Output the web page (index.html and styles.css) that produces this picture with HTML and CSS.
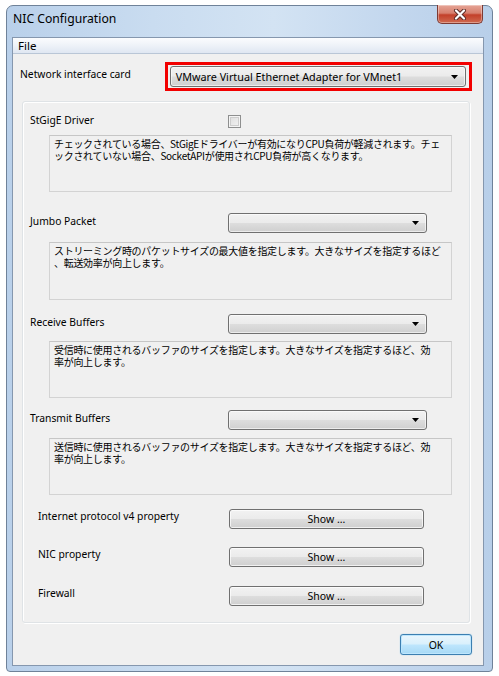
FILE: index.html
```html
<!DOCTYPE html>
<html lang="ja">
<head>
<meta charset="utf-8">
<title>NIC Configuration</title>
<link rel="stylesheet" href="styles.css">
</head>
<body>
<div class="window">
  <div class="titlebar">
    <span class="title">NIC Configuration</span>
    <div class="close">
      <svg width="14" height="11" viewBox="0 0 14 11">
        <path d="M3 1.5 L11 9.5 M11 1.5 L3 9.5" stroke="#5a2a25" stroke-width="4" stroke-linecap="round"/>
        <path d="M3 1.5 L11 9.5 M11 1.5 L3 9.5" stroke="#ffffff" stroke-width="2.2" stroke-linecap="round"/>
      </svg>
    </div>
  </div>
  <div class="client">
    <div class="menubar"><span class="menu-item">File</span></div>
    <div class="content">
      <div class="nic-row">
        <span class="label nic-label">Network interface card</span>
        <div class="highlight">
          <div class="combo combo-nic">
            <span class="combo-text">VMware Virtual Ethernet Adapter for VMnet1</span>
            <svg class="arrow" width="7" height="4" viewBox="0 0 7 4"><path d="M0 0H7L3.5 4Z" fill="#000"/></svg>
          </div>
        </div>
      </div>

      <div class="group">
        <div class="row row-check">
          <span class="label field-label">StGigE Driver</span>
          <span class="checkbox"></span>
        </div>
        <div class="desc desc-1">チェックされている場合、StGigEドライバーが有効になりCPU負荷が軽減されます。チェ<br>ックされていない場合、SocketAPIが使用されCPU負荷が高くなります。</div>

        <div class="row row-jumbo">
          <span class="label field-label">Jumbo Packet</span>
          <div class="combo combo-field"><span class="combo-text"></span><svg class="arrow" width="7" height="4" viewBox="0 0 7 4"><path d="M0 0H7L3.5 4Z" fill="#000"/></svg></div>
        </div>
        <div class="desc desc-2">ストリーミング時のパケットサイズの最大値を指定します。大きなサイズを指定するほど<br>、転送効率が向上します。</div>

        <div class="row row-recv">
          <span class="label field-label">Receive Buffers</span>
          <div class="combo combo-field"><span class="combo-text"></span><svg class="arrow" width="7" height="4" viewBox="0 0 7 4"><path d="M0 0H7L3.5 4Z" fill="#000"/></svg></div>
        </div>
        <div class="desc desc-3">受信時に使用されるバッファのサイズを指定します。大きなサイズを指定するほど、効<br>率が向上します。</div>

        <div class="row row-send">
          <span class="label field-label">Transmit Buffers</span>
          <div class="combo combo-field"><span class="combo-text"></span><svg class="arrow" width="7" height="4" viewBox="0 0 7 4"><path d="M0 0H7L3.5 4Z" fill="#000"/></svg></div>
        </div>
        <div class="desc desc-4">送信時に使用されるバッファのサイズを指定します。大きなサイズを指定するほど、効<br>率が向上します。</div>

        <div class="row row-btn row-ipv4">
          <span class="label btn-label">Internet protocol v4 property</span>
          <button class="btn show-btn">Show ...</button>
        </div>
        <div class="row row-btn row-nicprop">
          <span class="label btn-label">NIC property</span>
          <button class="btn show-btn">Show ...</button>
        </div>
        <div class="row row-btn row-fw">
          <span class="label btn-label">Firewall</span>
          <button class="btn show-btn">Show ...</button>
        </div>
      </div>

      <div class="footer">
        <button class="btn ok-btn">OK</button>
      </div>
    </div>
  </div>
</div>
</body>
</html>
```

FILE: styles.css
```css
* { box-sizing: border-box; }

html, body {
  margin: 0;
  padding: 0;
  background: #ffffff;
}

body {
  font-family: "Noto Sans", "Noto Sans CJK JP", sans-serif;
  font-size: 11px;
  color: #000;
}

.window {
  margin: 5px 0 0 6px;
  width: 487px;
  height: 667px;
  border: 1px solid #6f8299;
  border-radius: 7px 7px 4px 4px;
  background: linear-gradient(90deg, #b9d0ea 0%, #c9dcf0 30%, #d3e3f3 55%, #c3d7ee 80%, #b8cfe9 100%);
  padding: 0 8px 5px 5px;
  display: flex;
  flex-direction: column;
}

.titlebar {
  height: 31px;
  display: flex;
  justify-content: space-between;
  align-items: flex-start;
}

.title {
  font-family: "Noto Sans", sans-serif;
  font-size: 12.2px;
  line-height: 16px;
  padding-top: 5px;
  padding-left: 1px;
  color: #000;
}

.close {
  width: 46px;
  height: 19px;
  margin-top: -1px;
  margin-right: 1px;
  border: 1px solid #7d3a33;
  border-top: none;
  border-radius: 0 0 5px 5px;
  background: linear-gradient(180deg, #e6a597 0%, #d7806e 45%, #c3402a 55%, #cf6a50 100%);
  display: flex;
  align-items: center;
  justify-content: center;
  box-shadow: inset 0 0 0 1px rgba(255,255,255,0.35);
}

.client {
  flex: 1;
  border: 1px solid #8597ae;
  background: #f0f0f0;
  display: flex;
  flex-direction: column;
}

.menubar {
  height: 16px;
  background: linear-gradient(180deg, #fbfcfe 0%, #eef2f8 50%, #dfe7f2 100%);
  border-bottom: 1px solid #b9c6d6;
  padding-left: 5px;
  display: flex;
  align-items: center;
}

.menu-item {
  font-size: 11.5px;
  line-height: 14px;
}

.content {
  flex: 1;
  display: flex;
  flex-direction: column;
  padding: 8px 11px 0 7px;
}

.label {
  font-family: "Noto Sans", sans-serif;
  font-size: 10.3px;
  line-height: 15px;
  white-space: nowrap;
}

.nic-row {
  display: flex;
  align-items: center;
}

.nic-label {
  width: 146px;
  padding-bottom: 4px;
}

.highlight {
  width: 310px;
  height: 29px;
  border: 3px solid #f20000;
  padding: 1px 3px 1px 2px;
}

.combo {
  height: 21px;
  border: 1px solid #707070;
  border-radius: 3px;
  background: linear-gradient(180deg, #f2f2f2 0%, #ebebeb 48%, #dddddd 52%, #cfcfcf 100%);
  display: flex;
  align-items: center;
  justify-content: space-between;
  padding: 0 7px 0 5px;
  box-shadow: inset 0 0 0 1px rgba(255,255,255,0.6);
}

.combo-nic {
  width: 100%;
}

.combo-text {
  font-family: "Noto Sans", sans-serif;
  font-size: 10.8px;
  line-height: 14px;
  white-space: nowrap;
}

.group {
  margin: 10px 0 0 2px;
  width: 448px;
  border: 1px solid #dfe3e6;
  border-radius: 3px;
  box-shadow: inset 1px 1px 0 #ffffff, 1px 1px 0 #ffffff;
  padding: 0 0 16px 7px;
  display: flex;
  flex-direction: column;
}

.row {
  display: flex;
  align-items: center;
  height: 20px;
}

.field-label {
  width: 198px;
  padding-bottom: 4px;
}

.btn-label {
  width: 191px;
  margin-left: 8px;
  padding-bottom: 6px;
}

.row-check { margin-top: 10px; }
.row-jumbo { margin-top: 21px; }
.row-recv { margin-top: 14px; }
.row-send { margin-top: 12px; }
.row-ipv4 { margin-top: 14px; }
.row-nicprop { margin-top: 18px; }
.row-fw { margin-top: 19px; }

.checkbox {
  width: 13px;
  height: 13px;
  border: 1px solid #8e8f8f;
  background: linear-gradient(135deg, #dcdcdc 0%, #f4f4f4 100%);
  box-shadow: inset 0 0 0 1px #f4f4f4, inset 0 0 0 2px #cdcdcd;
  margin-bottom: 1px;
}

.combo-field {
  width: 199px;
  height: 20px;
}

.desc {
  margin-left: 19px;
  width: 403px;
  height: 57px;
  border: 1px solid #d3d3d3;
  border-top-color: #c6c6c6;
  background: #f0f0f0;
  padding: 2px 0 0 4px;
  font-family: "Noto Sans CJK JP", sans-serif;
  font-size: 10px;
  line-height: 12px;
  letter-spacing: -0.3px;
  white-space: nowrap;
  overflow: hidden;
}

.desc-1 { margin-top: 3px; }
.desc-2 { margin-top: 9px; height: 58px; }
.desc-3 { margin-top: 7px; }
.desc-4 { margin-top: 8px; }

.btn {
  font-family: "Noto Sans", sans-serif;
  font-size: 10.5px;
  color: #000;
  border: 1px solid #707070;
  border-radius: 3px;
  background: linear-gradient(180deg, #f2f2f2 0%, #ebebeb 48%, #dddddd 52%, #cfcfcf 100%);
  box-shadow: inset 0 0 0 1px rgba(255,255,255,0.7);
  padding: 0;
  line-height: 14px;
}

.show-btn {
  width: 195px;
  height: 20px;
  margin-left: 0;
}

.footer {
  display: flex;
  justify-content: flex-end;
  margin-top: 11px;
}

.ok-btn {
  width: 72px;
  height: 21px;
  border-color: #3c7fb1;
  background: linear-gradient(180deg, #eaf6fd 0%, #d9f0fc 48%, #bee6fd 52%, #a7d9f5 100%);
  box-shadow: inset 0 0 0 1px #bde6fd, 0 0 1px #62b7e9;
}
```
